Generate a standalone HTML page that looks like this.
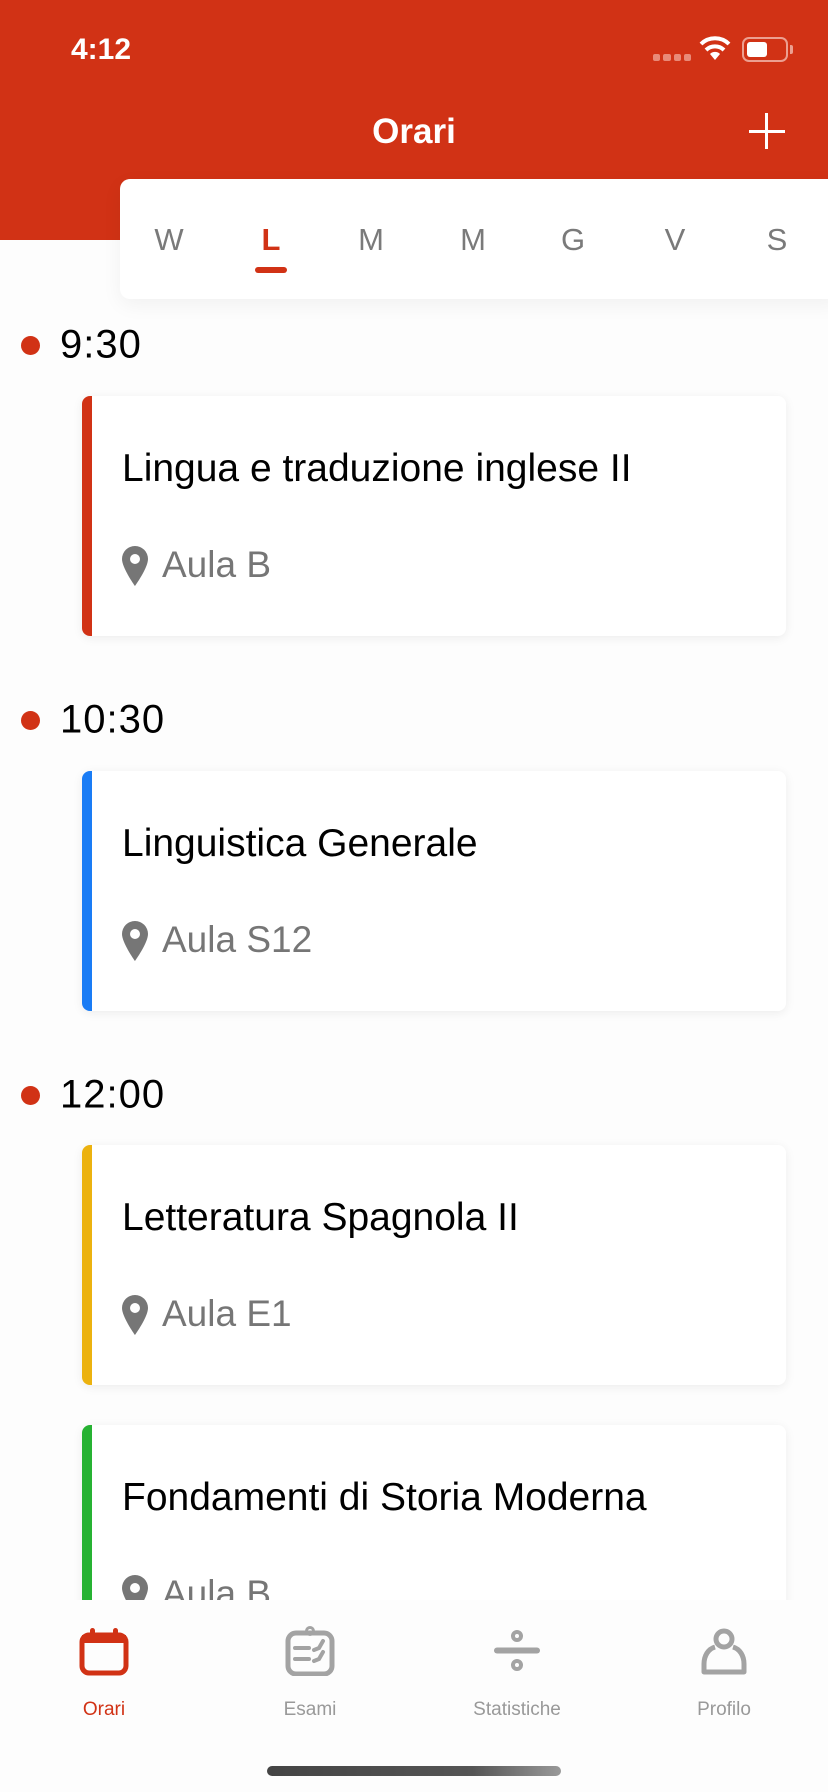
<!DOCTYPE html>
<html><head><meta charset="utf-8"><style>
*{margin:0;padding:0;box-sizing:border-box}
body{width:828px;height:1792px;overflow:hidden;background:#fdfdfd;font-family:"Liberation Sans",sans-serif;position:relative}
.hdr{position:absolute;left:0;top:0;width:828px;height:240px;background:#d13215}
.abs{position:absolute}
.days{position:absolute;left:120px;top:179px;width:720px;height:120px;background:#fff;border-radius:10px 0 0 10px;box-shadow:0 6px 20px rgba(0,0,0,0.05)}
.d{position:absolute;top:240px;font-size:31px;color:#7a7a7a;transform:translate(-50%,-50%)}
.dot{position:absolute;left:21px;width:19px;height:19px;border-radius:50%;background:#d13215}
.time{position:absolute;left:60px;font-size:40px;letter-spacing:1px;color:#000;transform:translateY(-50%)}
.card{position:absolute;left:82px;width:704px;height:240px;background:#fff;border-radius:8px;box-shadow:0 2px 10px rgba(0,0,0,0.07);border-left:10px solid}
.t{position:absolute;left:30px;top:51px;font-size:39px;color:#000}
.l{position:absolute;left:70px;top:148px;font-size:37px;color:#767676}
.pin{position:absolute;left:30px;top:150px}
.tab{position:absolute;top:1600px;left:0;width:828px;height:192px;background:#fdfdfd}
.lbl{position:absolute;top:1699px;font-size:19px;color:#999;transform:translateX(-50%)}
</style></head><body>
<div class="hdr"></div>
<div class="abs" style="left:71px;top:33px;font-size:30px;color:#fff;font-weight:bold">4:12</div>
<div class="abs" style="left:653px;top:54px;width:38px;height:7px;display:flex;gap:3px"><i style="flex:1;background:#e98a78;border-radius:2px"></i><i style="flex:1;background:#e98a78;border-radius:2px"></i><i style="flex:1;background:#e98a78;border-radius:2px"></i><i style="flex:1;background:#e98a78;border-radius:2px"></i></div>
<svg class="abs" style="left:699px;top:36px" width="32" height="26" viewBox="0 0 32 26"><path d="M16 24 L11 18 A7 7 0 0 1 21 18 Z" fill="#fff"/><path d="M7 14 A13 13 0 0 1 25 14" stroke="#fff" stroke-width="4" fill="none"/><path d="M2 8 A20 20 0 0 1 30 8" stroke="#fff" stroke-width="4" fill="none"/></svg>
<div class="abs" style="left:742px;top:37px;width:46px;height:25px;border:2px solid #ec9f90;border-radius:7px"><div style="position:absolute;left:3px;top:3px;width:20px;height:15px;background:#fff;border-radius:3px"></div></div>
<div class="abs" style="left:790px;top:45px;width:3px;height:9px;background:#ec9f90;border-radius:0 2px 2px 0"></div>
<div class="abs" style="left:0;width:828px;top:112px;text-align:center;font-size:35px;color:#fff;font-weight:bold">Orari</div>
<div class="abs" style="left:749px;top:130px;width:36px;height:3px;background:#fff"></div>
<div class="abs" style="left:765px;top:113px;width:3px;height:36px;background:#fff"></div>
<div class="days"></div>
<div class="d" style="left:169px">W</div>
<div class="d" style="left:271px;color:#d13215;font-weight:bold">L</div>
<div class="d" style="left:371px">M</div>
<div class="d" style="left:473px">M</div>
<div class="d" style="left:573px">G</div>
<div class="d" style="left:675px">V</div>
<div class="d" style="left:777px">S</div>
<div class="abs" style="left:255px;top:267px;width:32px;height:6px;border-radius:3px;background:#d13215"></div>

<div class="dot" style="top:336px"></div><div class="time" style="top:345px">9:30</div>
<div class="card" style="top:396px;border-color:#d13215"><div class="t">Lingua e traduzione inglese II</div>
<svg class="pin" width="26" height="40" viewBox="0 0 26 40"><path d="M13 0A13 13 0 0 0 0 13C0 22 13 40 13 40S26 22 26 13A13 13 0 0 0 13 0Z M13 8A5 5 0 1 1 13 18A5 5 0 1 1 13 8Z" fill="#767676" fill-rule="evenodd"/></svg><div class="l">Aula B</div></div>

<div class="dot" style="top:711px"></div><div class="time" style="top:720px">10:30</div>
<div class="card" style="top:771px;border-color:#1a7cf5"><div class="t">Linguistica Generale</div>
<svg class="pin" width="26" height="40" viewBox="0 0 26 40"><path d="M13 0A13 13 0 0 0 0 13C0 22 13 40 13 40S26 22 26 13A13 13 0 0 0 13 0Z M13 8A5 5 0 1 1 13 18A5 5 0 1 1 13 8Z" fill="#767676" fill-rule="evenodd"/></svg><div class="l">Aula S12</div></div>

<div class="dot" style="top:1086px"></div><div class="time" style="top:1095px">12:00</div>
<div class="card" style="top:1145px;border-color:#ecb20f"><div class="t">Letteratura Spagnola II</div>
<svg class="pin" width="26" height="40" viewBox="0 0 26 40"><path d="M13 0A13 13 0 0 0 0 13C0 22 13 40 13 40S26 22 26 13A13 13 0 0 0 13 0Z M13 8A5 5 0 1 1 13 18A5 5 0 1 1 13 8Z" fill="#767676" fill-rule="evenodd"/></svg><div class="l">Aula E1</div></div>

<div class="card" style="top:1425px;border-color:#26b232"><div class="t">Fondamenti di Storia Moderna</div>
<svg class="pin" width="26" height="40" viewBox="0 0 26 40"><path d="M13 0A13 13 0 0 0 0 13C0 22 13 40 13 40S26 22 26 13A13 13 0 0 0 13 0Z M13 8A5 5 0 1 1 13 18A5 5 0 1 1 13 8Z" fill="#767676" fill-rule="evenodd"/></svg><div class="l">Aula B</div></div>

<div class="tab"></div>
<svg class="abs" style="left:79px;top:1626px" width="50" height="50" viewBox="0 0 50 50"><rect x="3" y="9" width="44" height="38" rx="7" fill="none" stroke="#d13215" stroke-width="5"/><rect x="3" y="9" width="44" height="8" fill="#d13215"/><rect x="11" y="2" width="5" height="12" rx="2.5" fill="#d13215"/><rect x="34" y="2" width="5" height="12" rx="2.5" fill="#d13215"/></svg>
<svg class="abs" style="left:285px;top:1626px" width="50" height="50" viewBox="0 0 50 50"><rect x="3" y="7" width="44" height="41" rx="8" fill="none" stroke="#a3a3a3" stroke-width="5"/><circle cx="25" cy="5" r="3.5" fill="none" stroke="#a3a3a3" stroke-width="3"/><path d="M10 22H24M10 33H24M29 24L34 22L38 15M29 35L34 33L38 26" stroke="#a3a3a3" stroke-width="4" stroke-linecap="round" fill="none"/></svg>
<svg class="abs" style="left:492px;top:1626px" width="50" height="50" viewBox="0 0 50 50"><circle cx="25" cy="10" r="4" fill="none" stroke="#a3a3a3" stroke-width="4"/><circle cx="25" cy="39" r="4" fill="none" stroke="#a3a3a3" stroke-width="4"/><path d="M5 24.5H45" stroke="#a3a3a3" stroke-width="6" stroke-linecap="round"/></svg>
<svg class="abs" style="left:699px;top:1626px" width="50" height="50" viewBox="0 0 50 50"><circle cx="25" cy="13" r="8" fill="none" stroke="#a3a3a3" stroke-width="5"/><path d="M16 21C9 23 5 30 5 38V46H45V38C45 30 41 23 34 21" fill="none" stroke="#a3a3a3" stroke-width="5" stroke-linejoin="round"/></svg>
<div class="lbl" style="left:104px;color:#d13215">Orari</div>
<div class="lbl" style="left:310px">Esami</div>
<div class="lbl" style="left:517px">Statistiche</div>
<div class="lbl" style="left:724px">Profilo</div>
<div class="abs" style="left:267px;top:1766px;width:294px;height:10px;border-radius:5px;background:linear-gradient(90deg,#444,#555 70%,#999)"></div>
</body></html>
